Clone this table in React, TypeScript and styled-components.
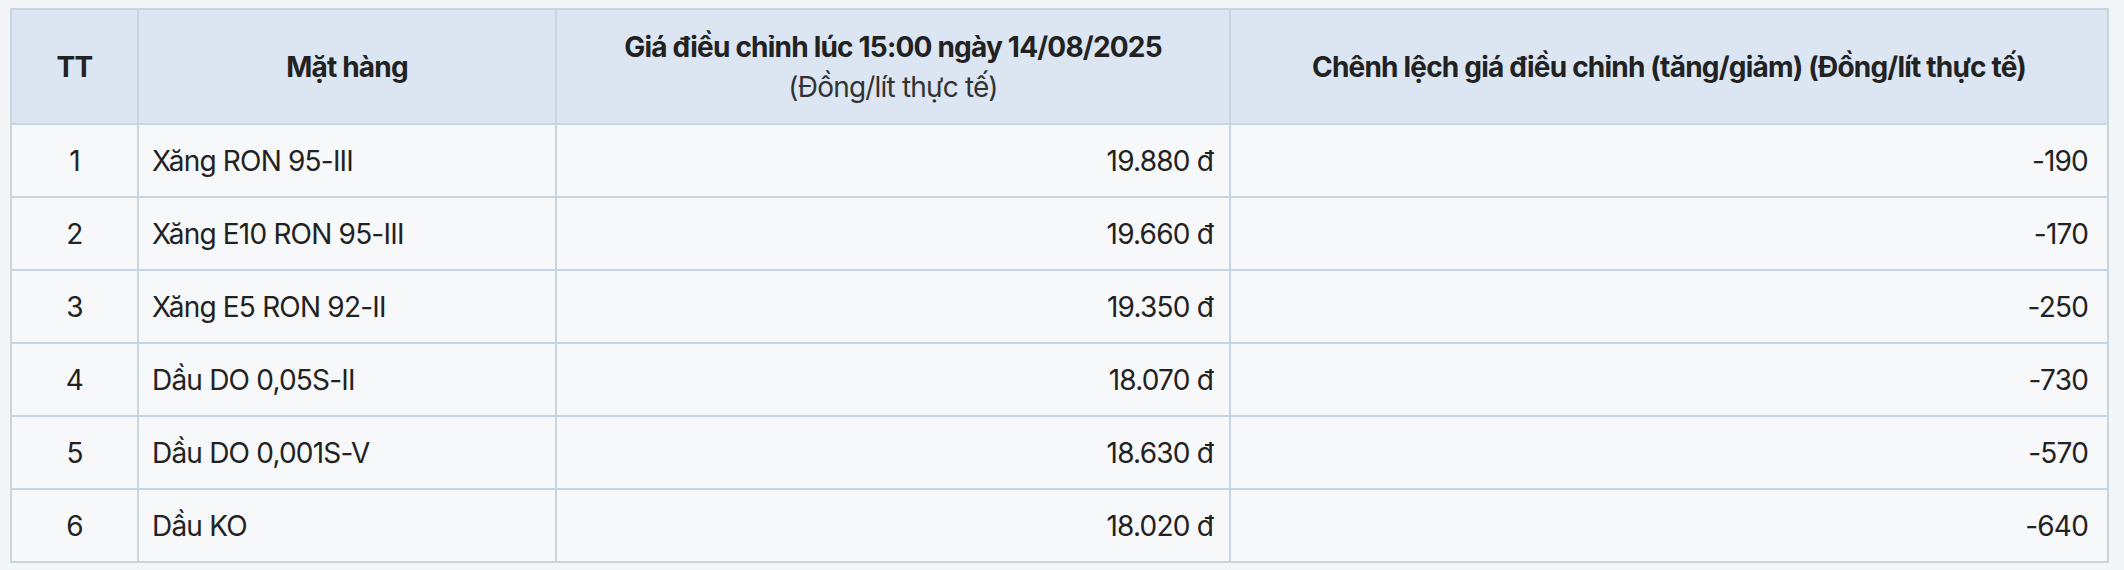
import React from 'react';
import styled, { createGlobalStyle } from 'styled-components';

type Row = { tt: number; name: string; price: string; diff: string };

const rows: Row[] = [
  { tt: 1, name: 'Xăng RON 95-III', price: '19.880 đ', diff: '-190' },
  { tt: 2, name: 'Xăng E10 RON 95-III', price: '19.660 đ', diff: '-170' },
  { tt: 3, name: 'Xăng E5 RON 92-II', price: '19.350 đ', diff: '-250' },
  { tt: 4, name: 'Dầu DO 0,05S-II', price: '18.070 đ', diff: '-730' },
  { tt: 5, name: 'Dầu DO 0,001S-V', price: '18.630 đ', diff: '-570' },
  { tt: 6, name: 'Dầu KO', price: '18.020 đ', diff: '-640' },
];

const GlobalStyle = createGlobalStyle`
  body {
    margin: 0;
    background: #f4f5f6;
    font-family: Inter, "Noto Sans", "Liberation Sans", sans-serif;
    color: #222;
  }
`;

export default function App() {
  return (
    <>
      <GlobalStyle />
      <Page>
        <PriceTable>
          <colgroup>
            <col style={{ width: 127 }} />
            <col style={{ width: 418 }} />
            <col style={{ width: 674 }} />
            <col />
          </colgroup>
          <thead>
            <tr>
              <HeadCell>TT</HeadCell>
              <HeadCell>Mặt hàng</HeadCell>
              <HeadCell>
                Giá điều chỉnh lúc 15:00 ngày 14/08/2025
                <SubLabel>(Đồng/lít thực tế)</SubLabel>
              </HeadCell>
              <HeadCell>Chênh lệch giá điều chỉnh (tăng/giảm) (Đồng/lít thực tế)</HeadCell>
            </tr>
          </thead>
          <tbody>
            {rows.map((r) => (
              <tr key={r.tt}>
                <Cell align="center">{r.tt}</Cell>
                <Cell $pad="13px">{r.name}</Cell>
                <Cell align="right">{r.price}</Cell>
                <Cell align="right" $pad="19px">{r.diff}</Cell>
              </tr>
            ))}
          </tbody>
        </PriceTable>
      </Page>
    </>
  );
}

const Page = styled.div`
  padding: 8px 15px 8px 10px;
`;

const PriceTable = styled.table`
  width: 2099px;
  table-layout: fixed;
  border-collapse: collapse;
  border: 2px solid #c6d6e1;
  font-size: 28px;
  letter-spacing: -0.8px;
`;

const HeadCell = styled.th`
  height: 113px;
  padding: 0 16px;
  background: #dce5f2;
  border: 2px solid #c6d6e1;
  color: #222;
  font-weight: 700;
  line-height: 40px;
  text-align: center;
  vertical-align: middle;
`;

const SubLabel = styled.span`
  display: block;
  font-weight: 400;
  color: #333;
`;

const Cell = styled.td<{ align?: 'left' | 'center' | 'right'; $pad?: string }>`
  height: 71px;
  padding: 0 ${({ $pad }) => $pad || '16px'};
  background: #f7f8f9;
  border: 2px solid #c6d6e1;
  text-align: ${({ align }) => align || 'left'};
  vertical-align: middle;
  font-weight: 400;
`;
